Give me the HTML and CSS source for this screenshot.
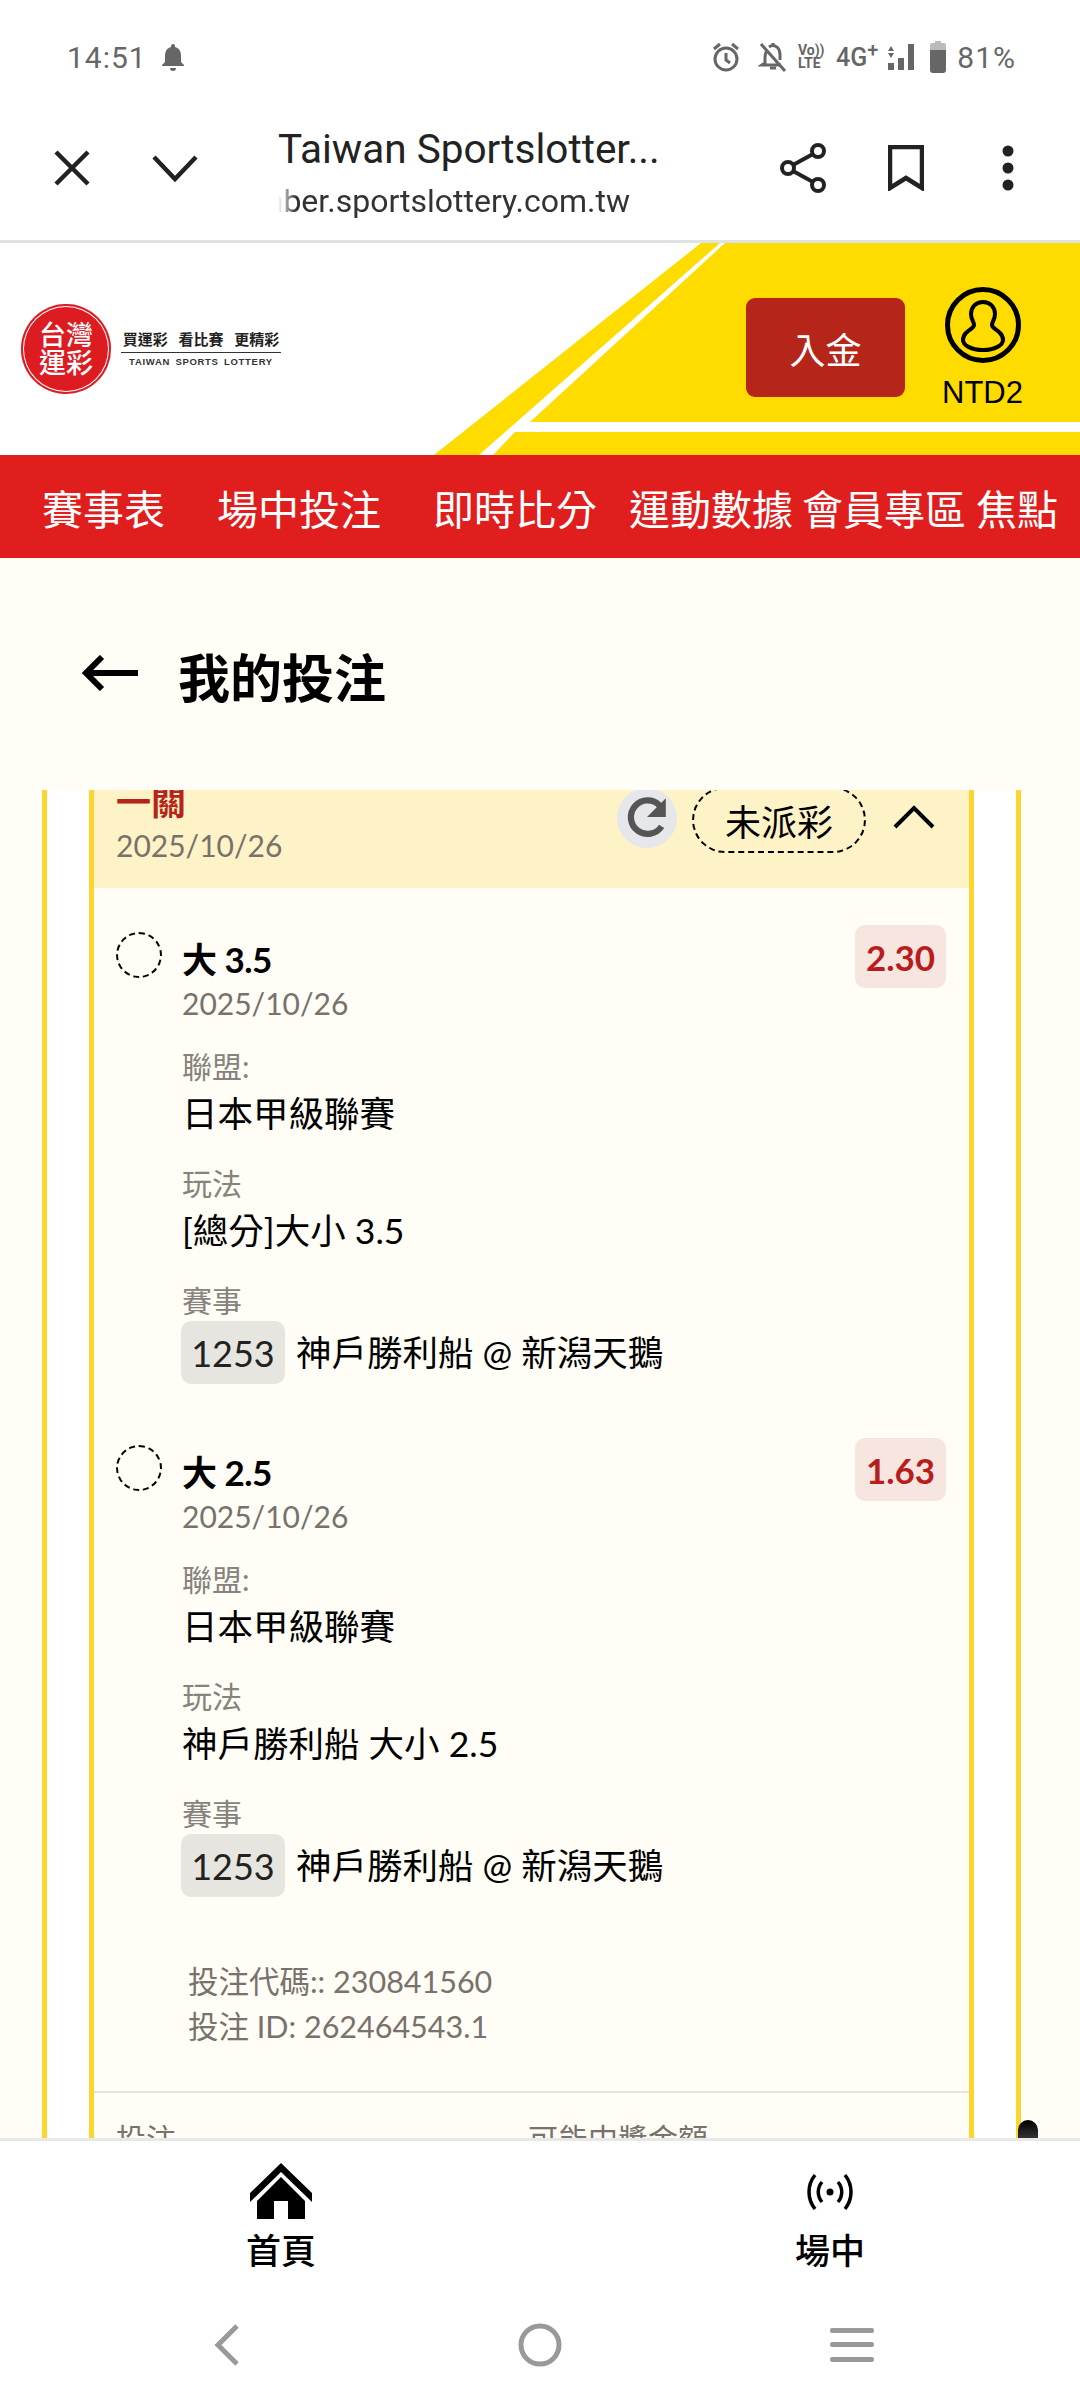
FILE: index.html
```html
<!DOCTYPE html>
<html>
    <head>
        <meta charset="utf-8">
        <title>我的投注</title>
        <link rel="stylesheet" href="styles.css">
    </head>
    <body>
        <div class="phone">

            <!-- android status bar -->
            <div class="statusbar">
                <span class="clock">14:51</span>
                <svg class="bell" width="24" height="28" viewBox="0 0 24 28"><path d="M12 1a2 2 0 0 1 2 2v1c4 1 6 4 6 9v6l3 3v1H1v-1l3-3v-6c0-5 2-8 6-9V3a2 2 0 0 1 2-2zM9 25h6a3 3 0 0 1-6 0z" fill="#666"/></svg>
                <div class="status-right">
                    <svg width="28" height="30" viewBox="0 0 28 30" fill="none" stroke="#666" stroke-width="3"><circle cx="14" cy="17" r="11"/><path d="M14 11v7l4 3M2 7l6-5M26 7l-6-5"/></svg>
                    <svg class="ic-mute" width="30" height="30" viewBox="0 0 30 30" fill="none" stroke="#666" stroke-width="3"><path d="M9 8c-1 2-2 4-2 7v6l-3 2h19M11 5c4-3 11-1 11 8v5"/><path d="M12 26h6M15 1v3M3 2l24 27"/></svg>
                    <div class="volte">Vo)) LTE</div>
                    <span class="net">4G<sup>+</sup></span>
                    <svg width="28" height="28" viewBox="0 0 28 28" fill="#666"><path d="M3 3l3 5H0zM3 15l-3-5h6zM0 20h6v7H0zM10 15h6v12h-6zM20 1h6v26h-6z"/></svg>
                    <svg class="ic-batt" width="16" height="32" viewBox="0 0 16 32"><path d="M5 0h6v2h3a2 2 0 0 1 2 2v6H0V4a2 2 0 0 1 2-2h3z" fill="#bbb"/><path d="M0 9h16v20a3 3 0 0 1-3 3H3a3 3 0 0 1-3-3z" fill="#666"/></svg>
                    <span class="batt">81%</span>
                </div>
            </div>

            <!-- custom tab toolbar -->
            <div class="toolbar">
                <svg class="ic-close" width="36" height="36" viewBox="0 0 36 36" stroke="#222" stroke-width="4.5" fill="none"><path d="M2 2l32 32M34 2L2 34"/></svg>
                <svg class="ic-chev" width="46" height="28" viewBox="0 0 46 28" stroke="#222" stroke-width="4.5" fill="none"><path d="M2 3l21 22L44 3"/></svg>
                <div class="tab-title">
                    <div class="page-name">Taiwan Sportslotter...</div>
                    <div class="page-url"><span>member.sportslottery.com.tw</span></div>
                </div>
                <svg class="ic-share" width="46" height="50" viewBox="0 0 46 50" fill="none" stroke="#222" stroke-width="4"><circle cx="38" cy="8" r="6"/><circle cx="8" cy="25" r="6"/><circle cx="38" cy="42" r="6"/><path d="M13 22l20-11M13 28l20 11"/></svg>
                <svg class="ic-mark" width="36" height="46" viewBox="0 0 36 46" fill="none" stroke="#222" stroke-width="4.5"><path d="M2 2h32v41L18 33 2 43z"/></svg>
                <svg class="ic-dots" width="12" height="46" viewBox="0 0 12 46" fill="#222"><circle cx="6" cy="6" r="5.5"/><circle cx="6" cy="23" r="5.5"/><circle cx="6" cy="40" r="5.5"/></svg>
            </div>

            <!-- site header -->
            <div class="site-head">
                <svg class="head-shape" width="1080" height="212" viewBox="0 0 1080 212"><path d="M434 212L701 0h19L479 212zM493 212l22-23h565v23zM530 179L725 0h355v179z" fill="#ffdc00"/></svg>
                <div class="logo">
                    <div class="logo-seal"><div class="seal-text">台灣運彩</div></div>
                    <div class="logo-text">
                        <div class="slogan">買運彩 看比賽 更精彩</div>
                        <div class="slogan-en">TAIWAN SPORTS LOTTERY</div>
                    </div>
                </div>
                <div class="head-actions">
                    <div class="deposit">入金</div>
                    <div class="account">
                        <svg width="76" height="76" viewBox="0 0 76 76" fill="none" stroke="#000" stroke-width="4"><circle cx="38" cy="38" r="35.5" stroke-width="5"/><path d="M38 15c-7 0-12 5-12 12 0 5 3 8 3 11 0 3-4 4-8 8-3 3-3 5-3 7 0 5 8 10 20 10s20-5 20-10c0-2 0-4-3-7-4-4-8-5-8-8 0-3 3-6 3-11 0-7-5-12-12-12z"/></svg>
                        <div class="acc-name">NTD2</div>
                    </div>
                </div>
            </div>

            <div class="mainnav">
                <span class="nav-item">賽事表</span>
                <span class="nav-item">場中投注</span>
                <span class="nav-item">即時比分</span>
                <span class="nav-item near">運動數據</span>
                <span class="nav-item close">會員專區</span>
                <span class="nav-item close">焦點</span>
            </div>

            <div class="page-title">
                <svg width="56" height="36" viewBox="0 0 56 36" fill="none" stroke="#000" stroke-width="6"><path d="M56 18H5M20 2L4 18l16 16"/></svg>
                <h1>我的投注</h1>
            </div>

            <!-- scrolled bet list -->
            <div class="scroller">
                <div class="frame">
                    <div class="card">
                        <div class="card-head">
                            <div class="head-left">
                                <div class="bet-type">一關</div>
                                <div class="date">2025/10/26</div>
                            </div>
                            <div class="head-right">
                                <div class="refresh">
                                    <svg width="46" height="46" viewBox="0 0 44 44" fill="none"><path d="M36 30A16 16 0 1 1 34 10" stroke="#555" stroke-width="6"/><path d="M40 3v18H22z" fill="#555"/></svg>
                                </div>
                                <div class="state">未派彩</div>
                                <svg class="ic-up" width="42" height="24" viewBox="0 0 42 24" fill="none" stroke="#000" stroke-width="4"><path d="M2 22L21 3l19 19"/></svg>
                            </div>
                        </div>

                        <div class="bet">
                            <div class="bet-mark"></div>
                            <div class="bet-body">
                                <div class="bet-name">大 3.5</div>
                                <div class="date">2025/10/26</div>
                                <div class="field">
                                    <div class="label">聯盟:</div>
                                    <div class="value">日本甲級聯賽</div>
                                </div>
                                <div class="field">
                                    <div class="label">玩法</div>
                                    <div class="value">[總分]大小 3.5</div>
                                </div>
                                <div class="field">
                                    <div class="label">賽事</div>
                                    <div class="match"><span class="match-no">1253</span>神戶勝利船 @ 新潟天鵝</div>
                                </div>
                            </div>
                            <div class="odds">2.30</div>
                        </div>

                        <div class="bet">
                            <div class="bet-mark"></div>
                            <div class="bet-body">
                                <div class="bet-name">大 2.5</div>
                                <div class="date">2025/10/26</div>
                                <div class="field">
                                    <div class="label">聯盟:</div>
                                    <div class="value">日本甲級聯賽</div>
                                </div>
                                <div class="field">
                                    <div class="label">玩法</div>
                                    <div class="value">神戶勝利船 大小 2.5</div>
                                </div>
                                <div class="field">
                                    <div class="label">賽事</div>
                                    <div class="match"><span class="match-no">1253</span>神戶勝利船 @ 新潟天鵝</div>
                                </div>
                            </div>
                            <div class="odds">1.63</div>
                        </div>

                        <div class="codes">
                            <div>投注代碼:: 230841560</div>
                            <div>投注 ID: 262464543.1</div>
                        </div>

                        <div class="totals">
                            <span class="total-a">投注</span>
                            <span>可能中獎金額</span>
                        </div>
                    </div>
                </div>
                <div class="thumb"></div>
            </div>

            <!-- bottom tabs -->
            <div class="tabs">
                <div class="tab">
                    <svg width="62" height="56" viewBox="0 0 62 56" fill="#000"><path d="M31 0l31 30v9L31 9 0 39v-9z"/><path d="M31 14l24 24v18H38V38H24v18H7V38z"/></svg>
                    <span>首頁</span>
                </div>
                <div class="tab second">
                    <svg width="46" height="38" viewBox="0 0 46 38" fill="none" stroke="#000" stroke-width="3.5"><circle cx="23" cy="19" r="3.5" fill="#000" stroke="none"/><path d="M15 9c-5 6-5 14 0 20M31 9c5 6 5 14 0 20M8 2C0 12 0 26 8 36M38 2c8 10 8 24 0 34"/></svg>
                    <span>場中</span>
                </div>
            </div>

            <div class="sysnav">
                <svg class="sys-back" width="26" height="42" viewBox="0 0 26 42" fill="none" stroke="#999" stroke-width="5"><path d="M23 2L4 21l19 19"/></svg>
                <svg class="sys-home" width="44" height="44" viewBox="0 0 44 44" fill="none" stroke="#999" stroke-width="5"><circle cx="22" cy="22" r="19"/></svg>
                <svg class="sys-recent" width="44" height="34" viewBox="0 0 44 34" fill="#999"><rect width="44" height="5" rx="2"/><rect y="14" width="44" height="5" rx="2"/><rect y="29" width="44" height="5" rx="2"/></svg>
            </div>
        </div>
    </body>
</html>
```

FILE: styles.css
```css
* {
    box-sizing: border-box;
}

body {
    margin: 0;
    background-color: #fff;
    font-family: Lato, "Noto Sans CJK TC", sans-serif;
    color: #000;
}

.phone {
    width: 1080px;
    height: 2400px;
    display: flex;
    flex-direction: column;
    overflow: hidden;
    background-color: #fffdf5;
}

/* status bar */
.statusbar {
    height: 100px;
    flex: none;
    background-color: #fff;
    display: flex;
    align-items: center;
    padding: 14px 64px 0 67px;
    font-family: Roboto, sans-serif;
    color: #666;
}

.clock {
    font-size: 30px;
    letter-spacing: 1px;
}

.bell {
    margin-left: 14px;
}

.status-right {
    margin-left: auto;
    display: flex;
    align-items: center;
    gap: 10px;
}

.ic-mute {
    margin-left: 8px;
}

.volte {
    width: 28px;
    font-size: 14px;
    font-weight: 700;
    line-height: 13px;
}

.net {
    font-size: 25px;
    font-weight: 500;
    white-space: nowrap;
}

.net sup {
    font-size: 20px;
    line-height: 0;
}

.ic-batt {
    margin-left: 4px;
}

.batt {
    font-size: 30px;
    letter-spacing: 1px;
    margin-left: 1px;
}

/* toolbar */
.toolbar {
    height: 143px;
    flex: none;
    background-color: #fff;
    border-bottom: 3px solid #dfe2e5;
    display: flex;
    align-items: center;
    padding: 0 0 4px 54px;
}

.ic-chev {
    margin-left: 62px;
}

.tab-title {
    margin: 7px 0 0 80px;
    width: 502px;
    flex: none;
}

.page-name {
    font-family: Roboto, sans-serif;
    font-size: 40.5px;
    line-height: 56px;
    color: #222;
}

.page-url {
    width: 352px;
    margin-top: 3px;
    overflow: hidden;
    display: flex;
    justify-content: flex-end;
    font-family: Roboto, sans-serif;
    font-size: 32px;
    line-height: 42px;
    color: #333;
    white-space: nowrap;
    -webkit-mask-image: linear-gradient(to right, transparent, #000 18px);
    mask-image: linear-gradient(to right, transparent, #000 18px);
}

.page-url span {
    flex: none;
}

.ic-mark {
    margin-left: 62px;
}

.ic-dots {
    margin-left: 78px;
}

/* site header */
.site-head {
    position: relative;
    height: 212px;
    flex: none;
    background-color: #fff;
    display: flex;
    align-items: center;
}

.head-shape {
    position: absolute;
    left: 0;
    top: 0;
}

.logo {
    position: relative;
    display: flex;
    align-items: center;
    gap: 10px;
    margin-left: 21px;
}

.logo-seal {
    width: 90px;
    height: 90px;
    border-radius: 50%;
    background-color: #dd1c22;
    box-shadow: inset 0 0 0 2px #dd1c22, inset 0 0 0 3px #fff;
    color: #fff;
    display: flex;
    align-items: center;
    justify-content: center;
}

.seal-text {
    width: 56px;
    font-size: 27px;
    font-weight: 500;
    line-height: 28px;
    text-align: center;
}

.logo-text {
    width: 160px;
}

.slogan {
    font-size: 15px;
    font-weight: 700;
    line-height: 22px;
    text-align: center;
    word-spacing: 7px;
    color: #222;
    border-bottom: 1px solid #333;
    padding-bottom: 2px;
    white-space: nowrap;
}

.slogan-en {
    font-family: "Liberation Sans", sans-serif;
    font-size: 9.5px;
    font-weight: 700;
    line-height: 18px;
    text-align: center;
    letter-spacing: 0.7px;
    word-spacing: 2px;
    color: #333;
}

.head-actions {
    position: relative;
    margin-left: auto;
    display: flex;
    gap: 37px;
    padding: 0 57px 0 0;
    align-self: flex-start;
    margin-top: 44px;
}

.deposit {
    width: 159px;
    height: 99px;
    margin-top: 11px;
    border-radius: 9px;
    background-color: #b5251a;
    color: #fff;
    font-family: "Noto Sans CJK TC", sans-serif;
    font-size: 36px;
    display: flex;
    align-items: center;
    justify-content: center;
}

.account {
    width: 81px;
    display: flex;
    flex-direction: column;
    align-items: center;
}

.acc-name {
    font-family: "Liberation Sans", sans-serif;
    font-size: 31px;
    line-height: 36px;
    margin-top: 12px;
}

/* red nav */
.mainnav {
    height: 103px;
    flex: none;
    background-color: #e01e1e;
    color: #fff;
    display: flex;
    align-items: center;
    padding-left: 42px;
    font-family: "Noto Sans CJK TC", sans-serif;
    font-size: 41px;
    white-space: nowrap;
}

.nav-item {
    margin-right: 52px;
    flex: none;
}

.nav-item.near {
    margin-left: -20px;
    margin-right: 9px;
}

.nav-item.close {
    margin-right: 10px;
}

/* page title */
.page-title {
    height: 232px;
    flex: none;
    display: flex;
    align-items: center;
    padding: 0 0 2px 82px;
    gap: 40px;
}

.page-title h1 {
    margin: 6px 0 0 0;
    font-family: "Noto Sans CJK TC", sans-serif;
    font-size: 52px;
    font-weight: 700;
    line-height: 60px;
}

/* scrolled area, the card is already scrolled up a little */
.scroller {
    position: relative;
    flex: 1;
    min-height: 0;
    overflow: hidden;
}

.frame {
    margin: -30px 0 0 42px;
    width: 979px;
    padding: 0 42px;
    background-color: #fff;
    border-left: 5px solid #fbd62f;
    border-right: 5px solid #fbd62f;
}

.card {
    border-left: 5px solid #fbd62f;
    border-right: 5px solid #fbd62f;
    background-color: #fffdf5;
}

.card-head {
    height: 128px;
    background-color: #fef3c7;
    display: flex;
    justify-content: space-between;
    padding: 0 34px 0 22px;
}

.head-left {
    padding-top: 18px;
}

.bet-type {
    font-family: "Noto Sans CJK TC", sans-serif;
    font-size: 35px;
    font-weight: 700;
    line-height: 44px;
    color: #b5251a;
}

.date {
    font-size: 30px;
    line-height: 40px;
    color: #78716c;
}

.head-left .date {
    margin-top: 3px;
}

.head-right {
    display: flex;
    align-items: center;
    align-self: flex-start;
    margin-top: 27px;
    height: 66px;
}

.refresh {
    width: 60px;
    height: 60px;
    border-radius: 50%;
    background-color: #e5e7eb;
    display: flex;
    align-items: center;
    justify-content: center;
    margin-top: -4px;
}

.state {
    width: 174px;
    height: 66px;
    margin-left: 15px;
    border: 2.5px dashed #000;
    border-radius: 33px;
    font-family: "Noto Sans CJK TC", sans-serif;
    font-size: 36px;
    display: flex;
    align-items: center;
    justify-content: center;
}

.ic-up {
    margin-left: 27px;
    margin-top: -6px;
}

.bet {
    display: flex;
    align-items: flex-start;
    padding: 37px 23px 0 22px;
}

.bet + .bet {
    padding-top: 54px;
}

.bet-mark {
    width: 46px;
    height: 46px;
    flex: none;
    margin-top: 7px;
    border: 2.5px dashed #000;
    border-radius: 50%;
}

.bet-body {
    flex: 1;
    margin: 12px 0 0 20px;
}

.bet-name {
    font-size: 35px;
    font-weight: 700;
    line-height: 44px;
    letter-spacing: -0.5px;
    margin-bottom: 2px;
}

.field {
    margin-top: 23px;
}

.field + .field {
    margin-top: 25px;
}

.label {
    font-size: 30px;
    line-height: 40px;
    color: #86827c;
}

.value {
    font-size: 35.5px;
    line-height: 48px;
    margin-top: 4px;
}

.match {
    display: flex;
    align-items: center;
    font-size: 35.5px;
    line-height: 48px;
    margin-top: 1px;
}

.match-no {
    width: 104px;
    height: 63px;
    margin: 0 11px 0 -1px;
    border-radius: 10px;
    background-color: #e7e5e0;
    display: flex;
    align-items: center;
    justify-content: center;
    font-size: 36px;
    color: #222;
}

.odds {
    width: 91px;
    height: 63px;
    flex: none;
    border-radius: 10px;
    background-color: #f6e6df;
    color: #b91c1c;
    font-size: 35px;
    font-weight: 700;
    display: flex;
    align-items: center;
    justify-content: center;
}

.codes {
    padding: 62px 0 0 94px;
    font-size: 30.5px;
    line-height: 45px;
    color: #78716c;
}

.totals {
    margin-top: 42px;
    border-top: 2px solid #e5e3dc;
    padding: 25px 0 0 22px;
    display: flex;
    font-size: 30px;
    line-height: 40px;
    color: #78716c;
    height: 200px;
}

.total-a {
    width: 412px;
}

.thumb {
    position: absolute;
    left: 1018px;
    bottom: 0;
    width: 20px;
    height: 18px;
    border-radius: 10px 10px 0 0;
    background: linear-gradient(#000, #333);
}

/* bottom tabs */
.tabs {
    height: 162px;
    flex: none;
    background-color: #fff;
    border-top: 3px solid #e8e8e8;
    display: grid;
    grid-template-columns: 562px 518px;
}

.tab {
    display: flex;
    flex-direction: column;
    align-items: center;
    padding-top: 22px;
    font-family: "Noto Sans CJK TC", sans-serif;
    font-size: 35px;
    font-weight: 500;
    line-height: 44px;
}

.tab span {
    margin-top: 8px;
}

.tab.second {
    padding-left: 18px;
    padding-top: 32px;
}

.tab.second span {
    margin-top: 16px;
}

/* android nav */
.sysnav {
    height: 100px;
    flex: none;
    background-color: #fff;
    display: flex;
    align-items: center;
    padding: 0 0 10px 214px;
}

.sys-home {
    margin-left: 278px;
}

.sys-recent {
    margin-left: 268px;
}
```
